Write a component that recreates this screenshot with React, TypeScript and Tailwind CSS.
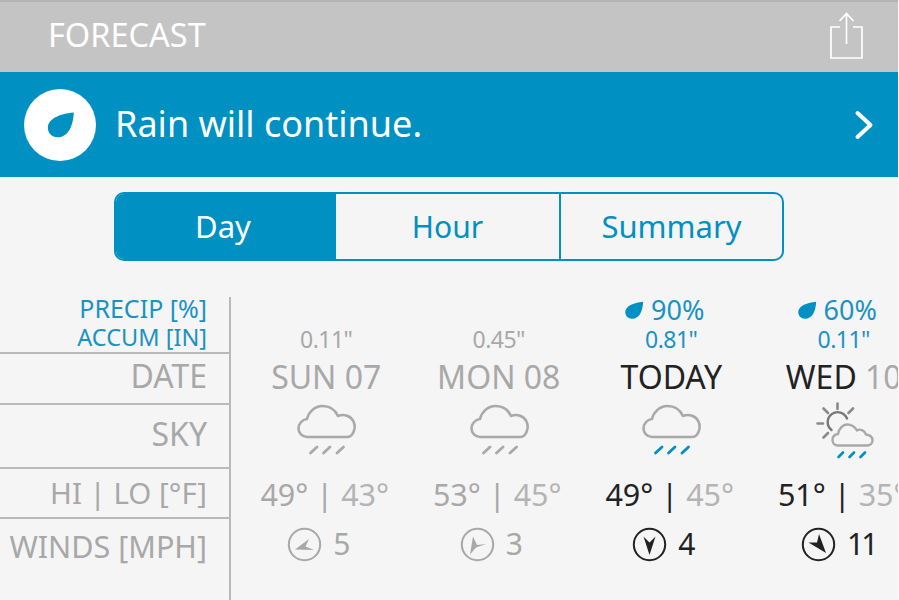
import React from "react";

const BLUE = "#0090c2";

function Drop({ size, color }: { size: number; color: string }) {
  return (
    <svg width={size} height={size} viewBox="0 0 24 24" className="block shrink-0">
      <path d="M23 2C22.5 12 19 22.5 9.5 22.5C4.5 22.5 1.5 19 1.5 14.5C1.5 7.5 11 3 23 2Z" fill={color} />
    </svg>
  );
}

function Cloud({ rain }: { rain: string }) {
  return (
    <svg width="60" height="52" viewBox="0 0 60 52" fill="none" className="block">
      <path
        d="M10 33C5 33 1.5 29 1.5 24.5C1.5 20 5 15.5 10 15C11.5 8 18 2 25.5 2C33 2 38.5 6.5 41 12C47 9.5 54 12 56.5 17.5C59.5 24 56 33 50 33Z"
        stroke="#a9a9a9"
        strokeWidth="2.6"
        strokeLinejoin="round"
      />
      <path d="M13.5 49L20 43M26.5 49L33 43M40 49L46.5 43" stroke={rain} strokeWidth="2.8" strokeLinecap="round" />
    </svg>
  );
}

function SunCloud() {
  return (
    <svg width="60" height="58" viewBox="0 0 60 58" fill="none" className="block">
      <path d="M21.5 2.5V8M7.5 7.5L12 12M37 7.5L32.5 12M1.5 22.5H7M7.5 36.5L12 32" stroke="#8a8a8a" strokeWidth="2.6" strokeLinecap="round" />
      <path d="M15.5 29A10 10 0 1 1 31 17.5" stroke="#777777" strokeWidth="2.4" strokeLinecap="round" />
      <path
        d="M22 44.5C18 44.5 16.5 41.5 16.5 39C16.5 35.5 19 33.5 22 33C23 27.5 27 23.5 31 23.5C36 23.5 39 26 41 29.5C44 27.5 48.5 29 50 33.5C54 34 56.5 36.5 56.5 39.5C56.5 42.5 54 44.5 51 44.5Z"
        fill="#f5f5f6"
        stroke="#a9a9a9"
        strokeWidth="2.4"
        strokeLinejoin="round"
      />
      <path d="M22.5 56L27 51.5M33.5 56L38 51.5M44.5 56L49 51.5" stroke={BLUE} strokeWidth="2.6" strokeLinecap="round" />
    </svg>
  );
}

function Wind({ color, d }: { color: string; d: string }) {
  return (
    <svg width="35" height="35" viewBox="0 0 35 35" fill="none" className="block shrink-0">
      <circle cx="17.5" cy="17.5" r="15.7" stroke={color} strokeWidth="2" />
      <path d={d} fill={color} />
    </svg>
  );
}

type Day = {
  pct?: string;
  accum: string;
  date: React.ReactNode;
  sky: React.ReactNode;
  hi: string;
  lo: string;
  wind: string;
  arrow: string;
  active: boolean;
};

const days: Day[] = [
  {
    accum: '0.11"',
    date: "SUN 07",
    sky: <Cloud rain="#a9a9a9" />,
    hi: "49°",
    lo: "43°",
    wind: "5",
    arrow: "M27 23L8 22.5L22 12L18.5 19.5Z",
    active: false,
  },
  {
    accum: '0.45"',
    date: "MON 08",
    sky: <Cloud rain="#a9a9a9" />,
    hi: "53°",
    lo: "45°",
    wind: "3",
    arrow: "M10 27.5L13 9.5L17 18L26 17L16 20.5Z",
    active: false,
  },
  {
    pct: "90%",
    accum: '0.81"',
    date: "TODAY",
    sky: <Cloud rain={BLUE} />,
    hi: "49°",
    lo: "45°",
    wind: "4",
    arrow: "M17.5 28L11.5 9.5L17.5 15.5L23.5 9.5Z",
    active: true,
  },
  {
    pct: "60%",
    accum: '0.11"',
    date: (
      <span>
        WED <span className="text-[#a9a9a9]">10</span>
      </span>
    ),
    sky: <SunCloud />,
    hi: "51°",
    lo: "35°",
    wind: "11",
    arrow: "M25 26L7.5 15.5L16 15.5L18 7Z",
    active: true,
  },
];

const labelRow = "flex items-center justify-end border-b-2 border-r-2 border-[#b9b9b9] pr-[22px] text-[#a8a8a8]";

export default function App() {
  return (
    <div
      className="h-[600px] w-[898px] overflow-hidden bg-[#f5f5f6]"
      style={{ fontFamily: '"Noto Sans", sans-serif' }}
    >
      <header className="flex h-[72px] items-center justify-between border-t-2 border-[#b4b4b4] bg-[#c4c4c4] pb-[3px] pl-[48px] pr-[33px]">
        <span className="text-[32.5px] leading-none text-white">FORECAST</span>
        <svg width="36" height="50" viewBox="0 0 36 50" fill="none" className="block">
          <path d="M11 16H2V47H33V16H24M17.5 33V3M10.5 10L17.5 2.5L24.5 10" stroke="#ffffff" strokeWidth="1.7" />
        </svg>
      </header>

      <section className="flex h-[105px] items-center justify-between bg-[#0090c2] pl-[24px] pr-[24px]">
        <div className="flex items-center gap-[19px]">
          <div className="flex h-[72px] w-[72px] items-center justify-center rounded-full bg-white">
            <Drop size={29} color={BLUE} />
          </div>
          <span className="pb-[2px] text-[36px] leading-none text-white">Rain will continue.</span>
        </div>
        <svg width="20" height="30" viewBox="0 0 20 30" fill="none" className="block">
          <path d="M3.5 3L16.5 15L3.5 27" stroke="#ffffff" strokeWidth="4" strokeLinecap="round" strokeLinejoin="round" />
        </svg>
      </section>

      <nav className="ml-[114px] mt-[15px] flex h-[69px] w-[670px] overflow-hidden rounded-[10px] border-2 border-[#0090c2] text-[31px] leading-none">
        <div className="flex w-[220px] items-center justify-center bg-[#0090c2] pr-[6px] text-white">Day</div>
        <div className="flex w-[225px] items-center justify-center border-r-2 border-[#0090c2] text-[30px] text-[#0090c2]">Hour</div>
        <div className="flex flex-1 items-center justify-center text-[#0090c2]">Summary</div>
      </nav>

      <div className="mt-[36px] grid h-[303px] grid-cols-[231px_repeat(4,172.5px)] grid-rows-[57px_51px_64px_50px_81px]">
        <div className={`${labelRow} flex-col !items-end !justify-end !text-[#1a93c4]`}>
          <span className="text-[25px] leading-[29px]">PRECIP [%]</span>
          <span className="text-[23.5px] leading-[29px]">ACCUM [IN]</span>
        </div>
        {days.map((d, i) => (
          <div key={i} className="flex flex-col items-center justify-end pl-[18px] text-[23px] leading-[30px]" style={{ color: d.active ? "#1a93c4" : "#a8a8a8" }}>
            {d.pct && (
              <span className="mr-[14px] flex items-center gap-[7px] text-[27px] leading-[29px]">
                <Drop size={20} color={BLUE} />
                {d.pct}
              </span>
            )}
            <span className="tracking-[-0.5px]">{d.accum}</span>
          </div>
        ))}

        <div className={`${labelRow} pb-[6px] text-[32px] leading-none`}>DATE</div>
        {days.map((d, i) => (
          <div key={i} className="flex items-center justify-center whitespace-nowrap pb-[6px] pl-[18px] text-[32px] leading-none" style={{ color: d.active ? "#222222" : "#a8a8a8" }}>
            {d.date}
          </div>
        ))}

        <div className={`${labelRow} pb-[4px] text-[32px] leading-none`}>SKY</div>
        {days.map((d, i) => (
          <div key={i} className="flex items-start justify-center pl-[18px]">
            <div className={i === 3 ? "-mt-[4px] ml-[4px]" : "-mt-[1px] ml-[2px]"}>{d.sky}</div>
          </div>
        ))}

        <div className={`${labelRow} text-[29.5px] leading-none`}>HI | LO [°F]</div>
        {days.map((d, i) => (
          <div key={i} className="flex items-center justify-center gap-[8px] whitespace-nowrap pl-[15px] text-[30.5px] leading-none">
            <span style={{ color: d.active ? "#222222" : "#a8a8a8" }}>{d.hi}</span>
            <span style={{ color: d.active ? "#222222" : "#a8a8a8" }}>|</span>
            <span className="text-[#b4b4b4]">{d.lo}</span>
          </div>
        ))}

        <div className="flex items-start justify-end border-r-2 border-[#b9b9b9] pr-[22px] pt-[8px] text-[30.5px] leading-[38px] text-[#a8a8a8]">WINDS [MPH]</div>
        {days.map((d, i) => (
          <div key={i} className={`flex items-start justify-center gap-[11px] pt-[8px] text-[30px] leading-[34px] ${i === 3 ? "pl-[7px]" : ""}`} style={{ color: d.active ? "#222222" : "#a8a8a8" }}>
            <Wind color={d.active ? "#222222" : "#a8a8a8"} d={d.arrow} />
            <span className="tracking-[-3px]">{d.wind}</span>
          </div>
        ))}
      </div>
    </div>
  );
}
